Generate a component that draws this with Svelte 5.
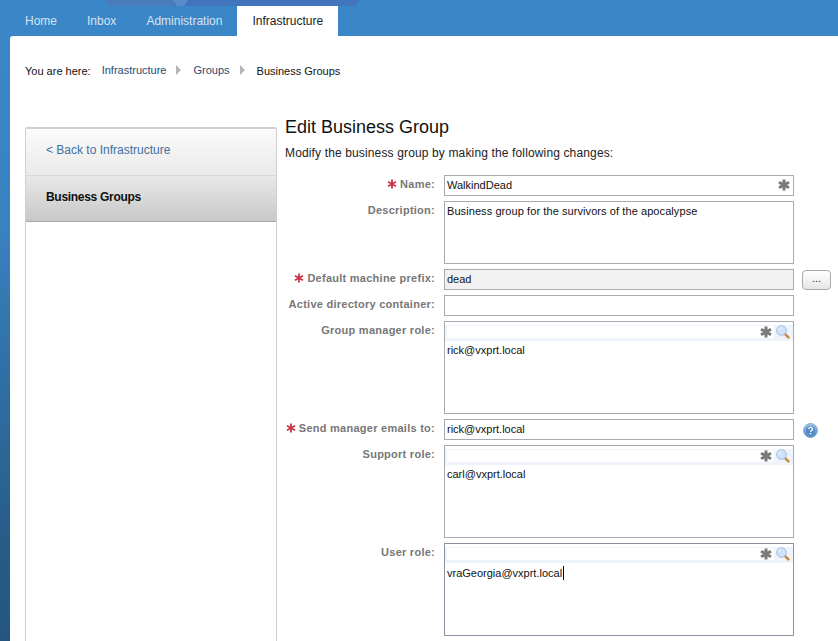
<script>
	const breadcrumbs = ['Infrastructure', 'Groups'];
	const tabs = ['Home', 'Inbox', 'Administration'];
</script>

{#snippet star()}
	<svg class="star" viewBox="0 0 12 12" width="12" height="12">
		<path d="M6 0.5v11M1 3.2l10 5.6M11 3.2l-10 5.6" stroke="#7a7a7a" stroke-width="3" fill="none" />
	</svg>
{/snippet}

{#snippet lens()}
	<svg class="lens" viewBox="0 0 14 14" width="14" height="14">
		<path d="M8.8 8.8l3.6 3.6" stroke="#c98b3e" stroke-width="2.6" stroke-linecap="round" />
		<circle cx="5.5" cy="5.5" r="4.8" fill="#cfe2f8" stroke="#9dbde2" />
		<path d="M2.6 5.2a3 3 0 0 1 2.6-2.6" stroke="#f2f8ff" fill="none" />
	</svg>
{/snippet}

{#snippet req()}
	<svg class="req" viewBox="0 0 10 10" width="10" height="10">
		<path d="M5 0.5v9M1 2.7l8 4.6M9 2.7l-8 4.6" stroke="#cc3344" stroke-width="1.8" fill="none" />
	</svg>
{/snippet}

{#snippet picker(value, caret)}
	<div class="box picker" class:focused={caret}>
		<div class="search">
			<div class="search-input">{@render star()}</div>
			{@render lens()}
		</div>
		<div class="picked">{value}{#if caret}<span class="caret"></span>{/if}</div>
	</div>
{/snippet}

<div class="page">
	<div class="banner"><div class="wedge"></div></div>
	<nav class="tabs">
		{#each tabs as tab}
			<span class="tab">{tab}</span>
		{/each}
		<span class="tab active">Infrastructure</span>
	</nav>

	<main class="panel">
		<div class="crumbs">
			<span class="here">You are here:</span>
			{#each breadcrumbs as crumb}
				<span class="crumb">{crumb}</span>
				<span class="arrow"></span>
			{/each}
			<span class="current">Business Groups</span>
		</div>

		<div class="columns">
			<aside class="side">
				<div class="back">&lt; Back to Infrastructure</div>
				<div class="section">Business Groups</div>
			</aside>

			<section class="content">
				<h1>Edit Business Group</h1>
				<p class="intro">Modify the business group by making the following changes:</p>

				<div class="form">
					<div class="label">{@render req()}Name:</div>
					<div class="field">
						<div class="box single name">WalkindDead{@render star()}</div>
					</div>

					<div class="label">Description:</div>
					<div class="field">
						<div class="box area">Business group for the survivors of the apocalypse</div>
					</div>

					<div class="label">{@render req()}Default machine prefix:</div>
					<div class="field">
						<div class="box single readonly">dead</div>
						<button class="more">...</button>
					</div>

					<div class="label">Active directory container:</div>
					<div class="field">
						<div class="box single"></div>
					</div>

					<div class="label">Group manager role:</div>
					<div class="field">
						{@render picker('rick@vxprt.local', false)}
					</div>

					<div class="label">{@render req()}Send manager emails to:</div>
					<div class="field">
						<div class="box single">rick@vxprt.local</div>
						<svg class="help" viewBox="0 0 15 15" width="15" height="15">
							<defs>
								<linearGradient id="help-fill" x1="0" y1="0" x2="0" y2="1">
									<stop offset="0" stop-color="#a8c8ea" />
									<stop offset="1" stop-color="#4a82c0" />
								</linearGradient>
							</defs>
							<circle cx="7.5" cy="7.5" r="6.9" fill="url(#help-fill)" stroke="#7ba5d2" />
							<circle cx="7.5" cy="7.5" r="4.6" fill="#528cc8" />
							<path d="M5.7 6a1.9 1.7 0 1 1 2.6 1.6c-.6.3-.8.6-.8 1.2" stroke="#fff" stroke-width="1.3" fill="none" />
							<path d="M7.5 10v1.4" stroke="#fff" stroke-width="1.3" />
						</svg>
					</div>

					<div class="label">Support role:</div>
					<div class="field">
						{@render picker('carl@vxprt.local', false)}
					</div>

					<div class="label">User role:</div>
					<div class="field">
						{@render picker('vraGeorgia@vxprt.local', true)}
					</div>
				</div>
			</section>
		</div>
	</main>
</div>

<style>
	:global(body) {
		margin: 0;
		overflow: hidden;
	}

	.page {
		position: relative;
		height: 641px;
		overflow: hidden;
		padding-left: 10px;
		box-sizing: border-box;
		background: linear-gradient(180deg, #3a87c8 0%, #3a82c0 35%, #2f6ea3 60%, #275c88 85%, #245680 100%);
		font-family: 'Liberation Sans', Arial, sans-serif;
		font-size: 11px;
		color: #111;
	}

	.banner {
		position: absolute;
		left: 105px;
		top: 0;
		width: 255px;
		height: 6px;
		background: linear-gradient(90deg, #4a7bbb 0 72px, #4275bb 72px);
		clip-path: polygon(0 0, 100% 0, 98% 100%, 2% 100%);
	}

	.wedge {
		position: absolute;
		left: 68px;
		top: 0;
		width: 15px;
		height: 6px;
		background: #5a8ccc;
		clip-path: polygon(0 0, 100% 0, 75% 100%, 30% 100%);
	}

	.tabs {
		display: flex;
		height: 36px;
		padding-left: 15px;
		font-size: 12px;
	}

	.tab {
		display: flex;
		align-items: center;
		padding-top: 6px;
		box-sizing: border-box;
		color: #d4e4f2;
		margin-right: 30px;
	}

	.tab.active {
		background: #fff;
		color: #222;
		margin-left: -15px;
		padding: 6px 15px 0;
		margin-right: 0;
	}

	.panel {
		background: #fff;
		height: 605px;
		border-top-left-radius: 3px;
		overflow: hidden;
	}

	.crumbs {
		display: flex;
		align-items: center;
		padding: 28px 0 0 15px;
		height: 14px;
	}

	.here {
		margin-right: 11px;
	}

	.crumb {
		color: #2a4a72;
		margin-top: -2px;
	}

	.arrow {
		width: 0;
		height: 0;
		margin: -2px 12px 0 10px;
		border-left: 5px solid #b5b5b5;
		border-top: 5px solid transparent;
		border-bottom: 5px solid transparent;
	}

	.columns {
		display: flex;
		padding: 49px 0 0 15px;
	}

	.side {
		width: 252px;
		height: 530px;
		flex-shrink: 0;
		box-sizing: border-box;
		border: 1px solid #d0d0d0;
		border-top: 2px solid #d0d0d0;
		border-radius: 2px 2px 0 0;
		font-size: 12px;
	}

	.back {
		height: 47px;
		padding: 14px 0 0 20px;
		box-sizing: border-box;
		color: #41709f;
		background: linear-gradient(180deg, #fbfbfb, #eaeaea);
		border-bottom: 1px solid #d8d8d8;
	}

	.section {
		height: 46px;
		padding: 14px 0 0 20px;
		box-sizing: border-box;
		font-weight: bold;
		letter-spacing: -0.3px;
		color: #111;
		background: linear-gradient(180deg, #e8e8e8, #c8c8c8);
		border-bottom: 1px solid #aaa;
	}

	.content {
		flex: 1;
		margin-left: 8px;
		margin-top: -11px;
	}

	h1 {
		margin: 0;
		font-size: 18px;
		font-weight: normal;
		line-height: 22px;
		color: #111;
	}

	.intro {
		margin: 8px 0 0;
		font-size: 12px;
		line-height: 14px;
		letter-spacing: 0.14px;
		color: #222;
	}

	.form {
		display: grid;
		grid-template-columns: 150px 1fr;
		column-gap: 9px;
		row-gap: 5px;
		margin-top: 15px;
	}

	.label {
		font-weight: bold;
		text-align: right;
		color: #777;
		padding-top: 2px;
		line-height: 14px;
		letter-spacing: 0.26px;
		white-space: nowrap;
	}

	.req {
		margin-right: 3px;
		vertical-align: -1px;
	}

	.field {
		display: flex;
		align-items: center;
	}

	.box {
		width: 350px;
		box-sizing: border-box;
		border: 1px solid #a9a9b0;
		background: #fff;
		padding: 3px 2px;
		line-height: 13px;
		flex-shrink: 0;
	}

	.single {
		height: 21px;
		position: relative;
	}

	.name .star {
		position: absolute;
		right: 3px;
		top: 3px;
	}

	.readonly {
		background: #f2f2f2;
	}

	.area {
		height: 63px;
		letter-spacing: 0.08px;
	}

	.more {
		width: 29px;
		height: 20px;
		margin-left: 8px;
		border: 1px solid #a9a9a9;
		border-radius: 4px;
		background: linear-gradient(180deg, #fff, #e6e6e6);
		font: 11px 'Liberation Sans', Arial, sans-serif;
		color: #333;
		padding: 0 0 3px;
	}

	.help {
		margin: 2px 0 0 9px;
	}

	.picker {
		height: 93px;
		padding: 3px 0 0;
	}

	.picker.focused {
		border-color: #8a94a0;
	}

	.search {
		display: flex;
		align-items: flex-start;
		background: #eef3fc;
		padding: 1px 3px 0 2px;
		height: 16px;
		box-sizing: border-box;
	}

	.search-input {
		flex: 1;
		height: 12px;
		background: #fff;
		padding-right: 2px;
		display: flex;
		justify-content: flex-end;
		align-items: center;
	}

	.lens {
		margin: -1px 0 0 2px;
	}

	.picked {
		padding: 3px 2px 0;
		color: #111;
	}

	.caret {
		display: inline-block;
		width: 1px;
		height: 14px;
		background: #000;
		margin-left: 1px;
		vertical-align: -3px;
	}
</style>
